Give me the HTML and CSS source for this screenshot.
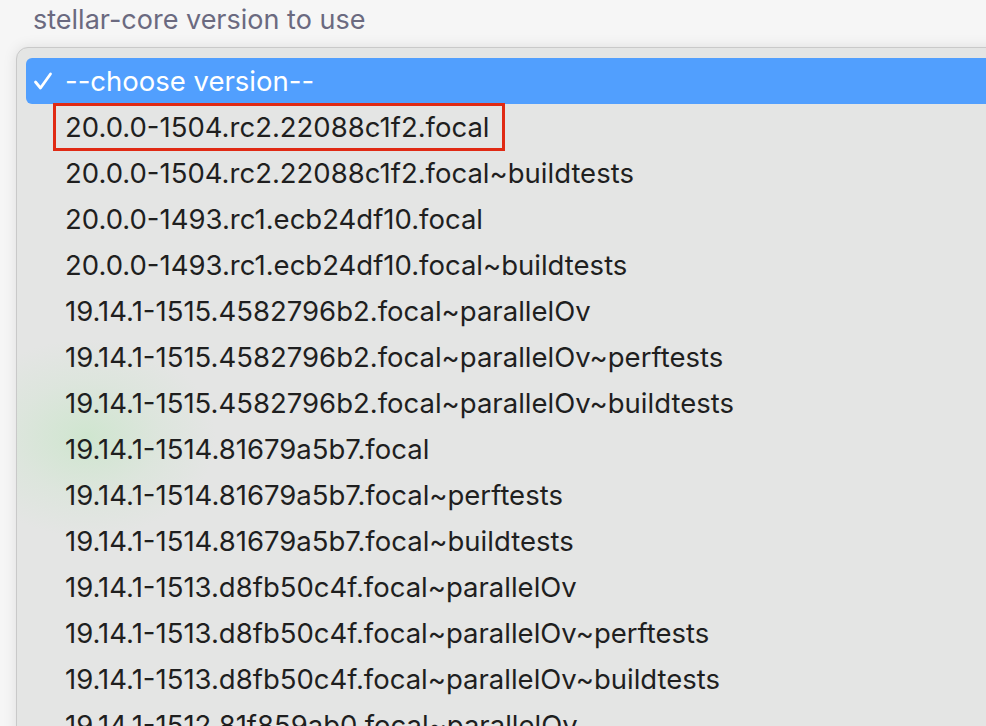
FILE: index.html
```html
<!DOCTYPE html>
<html>
<head>
<meta charset="utf-8">
<link rel="stylesheet" href="styles.css">
</head>
<body>
<div class="page">
  <div class="label">stellar-core version to use</div>
  <div class="menu">
    <div class="glow"></div>
    <div class="item selected"><svg class="check" width="20" height="18" viewBox="0 0 20 18"><path d="M2.5 10 L7.5 16 L17.5 2" fill="none" stroke="#ffffff" stroke-width="2.8" stroke-linecap="round" stroke-linejoin="round"/></svg><span>--choose version--</span></div>
    <div class="item"><span class="boxed">20.0.0-1504.rc2.22088c1f2.focal</span></div>
    <div class="item">20.0.0-1504.rc2.22088c1f2.focal~buildtests</div>
    <div class="item">20.0.0-1493.rc1.ecb24df10.focal</div>
    <div class="item">20.0.0-1493.rc1.ecb24df10.focal~buildtests</div>
    <div class="item">19.14.1-1515.4582796b2.focal~parallelOv</div>
    <div class="item">19.14.1-1515.4582796b2.focal~parallelOv~perftests</div>
    <div class="item">19.14.1-1515.4582796b2.focal~parallelOv~buildtests</div>
    <div class="item">19.14.1-1514.81679a5b7.focal</div>
    <div class="item">19.14.1-1514.81679a5b7.focal~perftests</div>
    <div class="item">19.14.1-1514.81679a5b7.focal~buildtests</div>
    <div class="item">19.14.1-1513.d8fb50c4f.focal~parallelOv</div>
    <div class="item">19.14.1-1513.d8fb50c4f.focal~parallelOv~perftests</div>
    <div class="item">19.14.1-1513.d8fb50c4f.focal~parallelOv~buildtests</div>
    <div class="item">19.14.1-1512.81f859ab0.focal~parallelOv</div>
  </div>
</div>
</body>
</html>
```
FILE: styles.css
```css
html, body {
  margin: 0;
  padding: 0;
  background: #f6f6f6;
  overflow: hidden;
  width: 986px;
  height: 726px;
}
.page {
  font-family: Inter, "Liberation Sans", sans-serif;
  padding: 4px 0 0 0;
}
.label {
  color: #6b6a80;
  font-size: 27px;
  line-height: 32px;
  padding-left: 33px;
  height: 43px;
}
.menu {
  position: relative;
  margin-left: 16px;
  width: 1000px;
  height: 700px;
  background: #e4e5e4;
  border: 1px solid #c9c9c9;
  border-radius: 12px;
  box-shadow: 0 0 14px rgba(0,0,0,0.10);
  padding: 10px 0 0 9px;
  box-sizing: border-box;
  overflow: hidden;
}
.glow {
  position: absolute;
  left: -60px;
  top: 290px;
  width: 260px;
  height: 200px;
  background: radial-gradient(ellipse at center, rgba(190,230,190,0.55) 0%, rgba(200,230,200,0.25) 40%, rgba(228,229,228,0) 70%);
  pointer-events: none;
}
.item {
  position: relative;
  height: 46px;
  display: flex;
  align-items: center;
  padding-left: 39px;
  font-size: 27.5px;
  color: #1f1f1f;
  white-space: nowrap;
}
.selected {
  background: #519ffe;
  color: #ffffff;
  border-radius: 6px;
  padding-left: 7px;
}
.check {
  margin-right: 12px;
  flex: none;
}
.boxed {
  outline: 3px solid #e02a14;
  padding: 4px 12px 4px 9px;
  margin-left: -9px;
}
```
